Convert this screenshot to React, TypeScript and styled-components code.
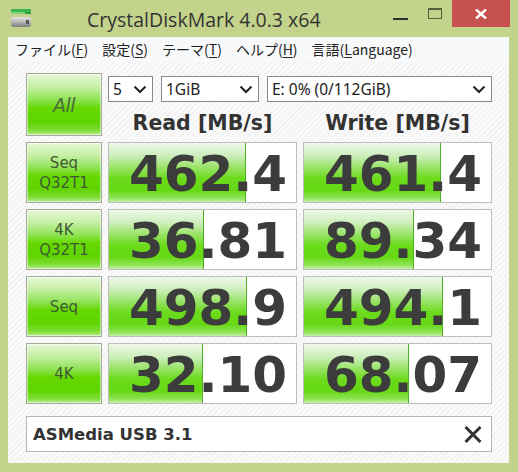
import React from "react";
import styled, { createGlobalStyle } from "styled-components";

const GlobalStyle = createGlobalStyle`
  html, body { margin: 0; padding: 0; width: 518px; height: 472px; overflow: hidden; background: #c3d38b; }
  #root { width: 518px; height: 472px; }
  * { box-sizing: border-box; }
`;

const Window = styled.div`
  width: 518px;
  height: 472px;
  background: #c3d38b;
  display: flex;
  flex-direction: column;
  font-family: "Open Sans", "Noto Sans", sans-serif;
`;

const TitleBar = styled.div`
  height: 37px;
  display: flex;
  align-items: flex-start;
`;

const AppIcon = styled.svg`
  margin: 8px 0 0 10px;
  flex: none;
`;

const Title = styled.div`
  margin: 6px 0 0 55px;
  font-family: "Open Sans", sans-serif;
  font-size: 19.5px;
  line-height: 28px;
  color: #333;
  flex: 1;
  white-space: nowrap;
`;

const Controls = styled.div`
  display: flex;
  align-items: flex-start;
  margin-right: 8px;
`;

const MinGlyph = styled.div`
  width: 15px;
  height: 2px;
  background: #2e2e2e;
  margin-top: 18px;
`;

const MaxGlyph = styled.div`
  width: 14px;
  height: 11px;
  border: 1px solid #56613c;
  border-top-width: 2px;
  margin: 8px 0 0 20px;
`;

const CloseButton = styled.div`
  width: 58px;
  height: 27px;
  margin-left: 10px;
  background: #c75050;
  display: flex;
  align-items: center;
  justify-content: center;
`;

const Client = styled.div`
  flex: 1;
  margin: 0 9px 9px 8px;
  display: flex;
  flex-direction: column;
  background: repeating-linear-gradient(
    -45deg,
    #fbfbfb 0px,
    #fbfbfb 2px,
    #f3f3f3 2px,
    #f3f3f3 4px
  );
`;

const MenuBar = styled.div`
  height: 25px;
  background: #f8f9fa;
  display: flex;
  align-items: center;
  font-family: "Noto Sans CJK JP", sans-serif;
  font-size: 14px;
  color: #222;
`;

const MenuItem = styled.div`
  padding: 0 7px;
  line-height: 25px;
  &:first-child { margin-left: 0; }
  u { text-decoration-thickness: 1px; text-underline-offset: 2px; }
`;

const Content = styled.div`
  flex: 1;
  display: flex;
  flex-direction: column;
  padding: 11px 17px 11px 18px;
`;

const Grid = styled.div`
  display: grid;
  grid-template-columns: 76px 189px 189px;
  grid-template-rows: 63px repeat(4, 61px);
  column-gap: 6px;
  row-gap: 6px;
`;

const GreenButton = styled.div`
  border: 1px solid #a3aa9c;
  background: linear-gradient(
    to bottom,
    #e6f8d8 0%,
    #c4efa2 22%,
    #8fe355 42%,
    #66d900 56%,
    #5fd400 78%,
    #7edd35 92%,
    #b5ec8c 100%
  );
  box-shadow: inset 0 0 0 1px rgba(255, 255, 255, 0.55);
  display: flex;
  flex-direction: column;
  align-items: center;
  justify-content: center;
  font-family: "DejaVu Sans", sans-serif;
  color: #3e5a32;
`;

const AllButton = styled(GreenButton)`
  font-size: 19px;
  color: #4b6b3b;
  font-style: italic;
  letter-spacing: -0.5px;
`;

const LabelLine = styled.div`
  font-size: 15px;
  line-height: 20px;
`;

const TopPanel = styled.div`
  grid-column: 2 / span 2;
  display: flex;
  flex-direction: column;
`;

const SelectRow = styled.div`
  margin-top: 3px;
  display: flex;
  gap: 8px;
  height: 26px;
`;

const SelectBox = styled.div<{ $w: number }>`
  width: ${(p) => p.$w}px;
  height: 26px;
  border: 1px solid #8a8a8a;
  background: #fff;
  display: flex;
  align-items: center;
  justify-content: space-between;
  padding: 0 5px 0 4px;
  font-family: "Noto Sans", sans-serif;
  font-size: 15.5px;
  color: #222;
`;

const HeaderRow = styled.div`
  flex: 1;
  display: grid;
  grid-template-columns: 189px 189px;
  column-gap: 6px;
  align-items: center;
  padding-top: 8px;
`;

const Header = styled.div`
  text-align: center;
  font-family: "DejaVu Sans", sans-serif;
  font-weight: bold;
  font-size: 20.5px;
  color: #333;
  line-height: 24px;
`;

const ValueCell = styled.div`
  position: relative;
  border: 1px solid #bdbdbd;
  background: #fff;
  display: flex;
  align-items: center;
  justify-content: center;
  padding-left: 11px;
  overflow: hidden;
`;

const Bar = styled.div<{ $w: number }>`
  position: absolute;
  left: 0;
  top: 0;
  bottom: 0;
  width: ${(p) => p.$w}px;
  border-right: 1px solid #4fae22;
  background: linear-gradient(
    to bottom,
    #eef8e8 0%,
    #cdeebb 22%,
    #92e25c 44%,
    #6bdb1c 60%,
    #66d814 80%,
    #8de455 93%,
    #c6f1a8 100%
  );
`;

const Value = styled.div`
  position: relative;
  font-family: "DejaVu Sans", sans-serif;
  font-weight: bold;
  font-size: 50px;
  line-height: 1;
  color: #3c3c3c;
  margin-top: 2px;
`;

const CommentBox = styled.div`
  margin-top: 12px;
  height: 36px;
  border: 1px solid #b5b5b5;
  background: #fff;
  display: flex;
  align-items: center;
  justify-content: space-between;
  padding: 0 9px 0 6px;
  font-family: "DejaVu Sans", sans-serif;
  font-weight: bold;
  font-size: 16.5px;
  color: #333;
`;

const Chevron = () => (
  <svg width="14" height="9" viewBox="0 0 14 9">
    <path d="M1.5 1.5 L7 7 L12.5 1.5" fill="none" stroke="#222" strokeWidth="2" />
  </svg>
);

type Row = { l1: string; l2?: string; read: string; rw: number; write: string; ww: number };

const rows: Row[] = [
  { l1: "Seq", l2: "Q32T1", read: "462.4", rw: 137, write: "461.4", ww: 137 },
  { l1: "4K", l2: "Q32T1", read: "36.81", rw: 95, write: "89.34", ww: 110 },
  { l1: "Seq", read: "498.9", rw: 138, write: "494.1", ww: 139 },
  { l1: "4K", read: "32.10", rw: 94, write: "68.07", ww: 105 },
];

export default function App() {
  return (
    <>
      <GlobalStyle />
      <Window>
        <TitleBar>
          <AppIcon width="22" height="20" viewBox="0 0 22 20">
            <defs>
              <linearGradient id="drv" x1="0" y1="0" x2="0" y2="1">
                <stop offset="0" stopColor="#e4e4e4" />
                <stop offset="0.5" stopColor="#b4b4b4" />
                <stop offset="1" stopColor="#7c7c7c" />
              </linearGradient>
            </defs>
            <rect x="1" y="1" width="20" height="3" rx="1" fill="#37b54a" />
            <rect x="1" y="4" width="14" height="2" fill="#7fd07f" />
            <rect x="15" y="4" width="6" height="2" fill="#2f9a3f" />
            <rect x="1" y="9" width="20" height="10" rx="2" fill="url(#drv)" />
            <rect x="16" y="12" width="3" height="4" fill="#555" />
          </AppIcon>
          <Title>CrystalDiskMark 4.0.3 x64</Title>
          <Controls>
            <MinGlyph />
            <MaxGlyph />
            <CloseButton>
              <svg width="12" height="10" viewBox="0 0 12 10">
                <path d="M1 0.5 L11 9.5 M11 0.5 L1 9.5" stroke="#fff" strokeWidth="2.4" />
              </svg>
            </CloseButton>
          </Controls>
        </TitleBar>
        <Client>
          <MenuBar>
            <MenuItem>ファイル(<u>F</u>)</MenuItem>
            <MenuItem>設定(<u>S</u>)</MenuItem>
            <MenuItem>テーマ(<u>T</u>)</MenuItem>
            <MenuItem>ヘルプ(<u>H</u>)</MenuItem>
            <MenuItem>言語(<u>L</u>anguage)</MenuItem>
          </MenuBar>
          <Content>
            <Grid>
              <AllButton>All</AllButton>
              <TopPanel>
                <SelectRow>
                  <SelectBox $w={45}>
                    <span>5</span>
                    <Chevron />
                  </SelectBox>
                  <SelectBox $w={98}>
                    <span>1GiB</span>
                    <Chevron />
                  </SelectBox>
                  <SelectBox $w={225}>
                    <span>E: 0% (0/112GiB)</span>
                    <Chevron />
                  </SelectBox>
                </SelectRow>
                <HeaderRow>
                  <Header>Read [MB/s]</Header>
                  <Header>Write [MB/s]</Header>
                </HeaderRow>
              </TopPanel>
              {rows.map((r, i) => (
                <React.Fragment key={i}>
                  <GreenButton>
                    <LabelLine>{r.l1}</LabelLine>
                    {r.l2 && <LabelLine>{r.l2}</LabelLine>}
                  </GreenButton>
                  <ValueCell>
                    <Bar $w={r.rw} />
                    <Value>{r.read}</Value>
                  </ValueCell>
                  <ValueCell>
                    <Bar $w={r.ww} />
                    <Value>{r.write}</Value>
                  </ValueCell>
                </React.Fragment>
              ))}
            </Grid>
            <CommentBox>
              <span>ASMedia USB 3.1</span>
              <svg width="18" height="17" viewBox="0 0 18 17">
                <path d="M1.5 1 L16.5 16 M16.5 1 L1.5 16" stroke="#333" strokeWidth="3" />
              </svg>
            </CommentBox>
          </Content>
        </Client>
      </Window>
    </>
  );
}
